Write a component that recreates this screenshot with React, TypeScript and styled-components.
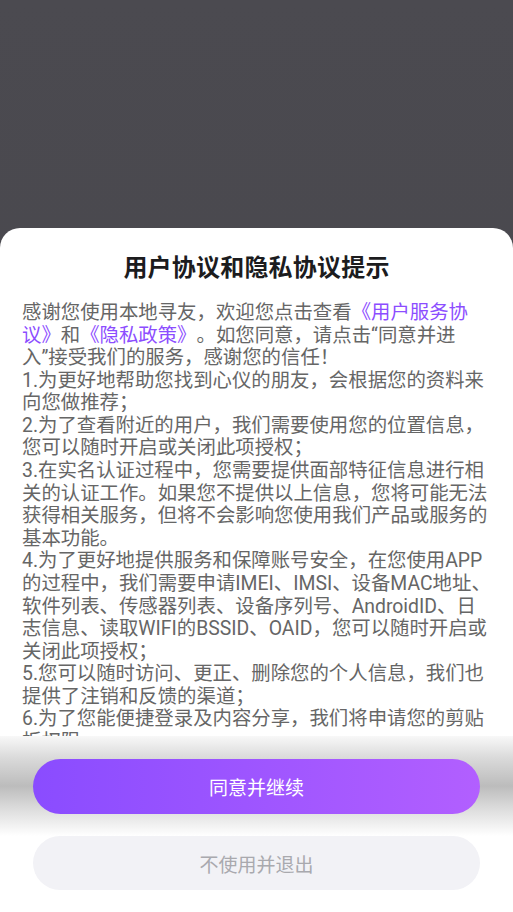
import React from "react";
import styled, { createGlobalStyle } from "styled-components";

const Global = createGlobalStyle`
  html, body { margin: 0; padding: 0; }
  body {
    font-family: Roboto, "Noto Sans CJK SC", sans-serif;
    -webkit-font-smoothing: antialiased;
  }
  * { box-sizing: border-box; }
`;

const Page = styled.div`
  height: 912px;
  width: 100%;
  display: flex;
  flex-direction: column;
  background: linear-gradient(to bottom, #4b4a50 0%, #47464b 100%);
  overflow: hidden;
`;

const Backdrop = styled.div`
  flex: 1;
`;

const Sheet = styled.section`
  background: #ffffff;
  border-radius: 20px 20px 0 0;
  display: flex;
  flex-direction: column;
  padding-top: 25px;
`;

const Title = styled.h1`
  margin: 0;
  text-align: center;
  font-size: 24px;
  line-height: 30px;
  font-weight: 700;
  color: #1c1c1e;
  letter-spacing: 0.2px;
`;

const Body = styled.div`
  margin-top: 19px;
  height: 434px;
  overflow: hidden;
  padding: 0 22px;
  font-size: 19.4px;
  line-height: 22.58px;
  color: #666666;
  white-space: nowrap;
  text-spacing-trim: space-all;
`;

const Link = styled.span`
  color: #8c4dff;
`;

const Footer = styled.div`
  display: flex;
  flex-direction: column;
  gap: 22px;
  padding: 23px 33px 22px;
  background: linear-gradient(
    to bottom,
    #f8f8f8 0px,
    #dadada 22px,
    #bcbcbc 50px,
    #dedede 74px,
    #ffffff 100px,
    #ffffff 100%
  );
`;

const Button = styled.button<{ $primary?: boolean }>`
  height: ${(p) => (p.$primary ? "55px" : "54px")};
  width: 100%;
  border: none;
  border-radius: 28px;
  font-family: Roboto, "Noto Sans CJK SC", sans-serif;
  font-size: 19px;
  display: flex;
  align-items: center;
  justify-content: center;
  padding: 0;
  background: ${(p) =>
    p.$primary
      ? "linear-gradient(to right, #8a4cff 0%, #b25fff 100%)"
      : "#f2f2f6"};
  color: ${(p) => (p.$primary ? "#ffffff" : "#a9a9ae")};
`;

export default function App() {
  return (
    <>
      <Global />
      <Page>
        <Backdrop />
        <Sheet>
          <Title>用户协议和隐私协议提示</Title>
          <Body>
            感谢您使用本地寻友，欢迎您点击查看<Link>《用户服务协<br />议》</Link>和<Link>《隐私政策》</Link>。如您同意，请点击“同意并进<br />
            入”接受我们的服务，感谢您的信任！<br />
            1.为更好地帮助您找到心仪的朋友，会根据您的资料来<br />
            向您做推荐；<br />
            2.为了查看附近的用户，我们需要使用您的位置信息，<br />
            您可以随时开启或关闭此项授权；<br />
            3.在实名认证过程中，您需要提供面部特征信息进行相<br />
            关的认证工作。如果您不提供以上信息，您将可能无法<br />
            获得相关服务，但将不会影响您使用我们产品或服务的<br />
            基本功能。<br />
            4.为了更好地提供服务和保障账号安全，在您使用APP<br />
            的过程中，我们需要申请IMEI、IMSI、设备MAC地址、<br />
            软件列表、传感器列表、设备序列号、AndroidID、日<br />
            志信息、读取WIFI的BSSID、OAID，您可以随时开启或<br />
            关闭此项授权；<br />
            5.您可以随时访问、更正、删除您的个人信息，我们也<br />
            提供了注销和反馈的渠道；<br />
            6.为了您能便捷登录及内容分享，我们将申请您的剪贴<br />
            板权限。
          </Body>
          <Footer>
            <Button $primary>同意并继续</Button>
            <Button>不使用并退出</Button>
          </Footer>
        </Sheet>
      </Page>
    </>
  );
}
